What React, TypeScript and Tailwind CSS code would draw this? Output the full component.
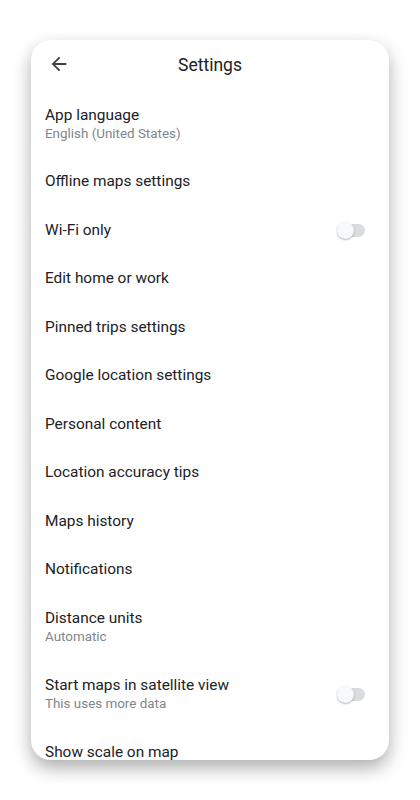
import React from 'react';

type Item = { title: string; sub?: string; toggle?: boolean };

const items: Item[] = [
  { title: 'App language', sub: 'English (United States)' },
  { title: 'Offline maps settings' },
  { title: 'Wi-Fi only', toggle: true },
  { title: 'Edit home or work' },
  { title: 'Pinned trips settings' },
  { title: 'Google location settings' },
  { title: 'Personal content' },
  { title: 'Location accuracy tips' },
  { title: 'Maps history' },
  { title: 'Notifications' },
  { title: 'Distance units', sub: 'Automatic' },
  { title: 'Start maps in satellite view', sub: 'This uses more data', toggle: true },
  { title: 'Show scale on map' },
];

function Toggle() {
  return (
    <div className="relative w-[29px] h-[17px] flex items-center">
      <div className="w-[28px] h-[13px] rounded-full bg-[#dadce0]" />
      <div className="absolute left-0 top-0 w-[17px] h-[17px] rounded-full bg-[#f8f9fa] shadow-[0_1px_2px_rgba(0,0,0,0.3)]" />
    </div>
  );
}

function Row({ item }: { item: Item }) {
  return (
    <div
      className={`flex items-center justify-between pl-[14px] pr-[23px] ${
        item.sub ? 'h-[67px]' : 'h-[48.5px]'
      }`}
    >
      <div className="flex flex-col">
        <span className="text-[15.4px] leading-[19px] text-[#202124]">{item.title}</span>
        {item.sub && (
          <span className="text-[13.4px] leading-[18px] text-[#80868b]">{item.sub}</span>
        )}
      </div>
      {item.toggle && <Toggle />}
    </div>
  );
}

export default function App() {
  return (
    <div className="w-[420px] h-[800px] bg-white pt-[40px] pl-[31px] font-['Roboto',sans-serif]">
      <div className="w-[358px] h-[720px] bg-white rounded-[20px] overflow-hidden shadow-[0_8px_18px_rgba(0,0,0,0.32)]">
        <div className="relative h-[50.5px] pb-[1px] flex items-center justify-center">
          <svg
            className="absolute left-[17px] top-[13px]"
            width="22"
            height="22"
            viewBox="0 0 24 24"
            fill="#3c4043"
          >
            <path d="M20 11H7.83l5.59-5.59L12 4l-8 8 8 8 1.41-1.41L7.83 13H20v-2z" />
          </svg>
          <span className="text-[17.5px] text-[#202124]">Settings</span>
        </div>
        {items.map((it) => (
          <Row key={it.title} item={it} />
        ))}
      </div>
    </div>
  );
}
